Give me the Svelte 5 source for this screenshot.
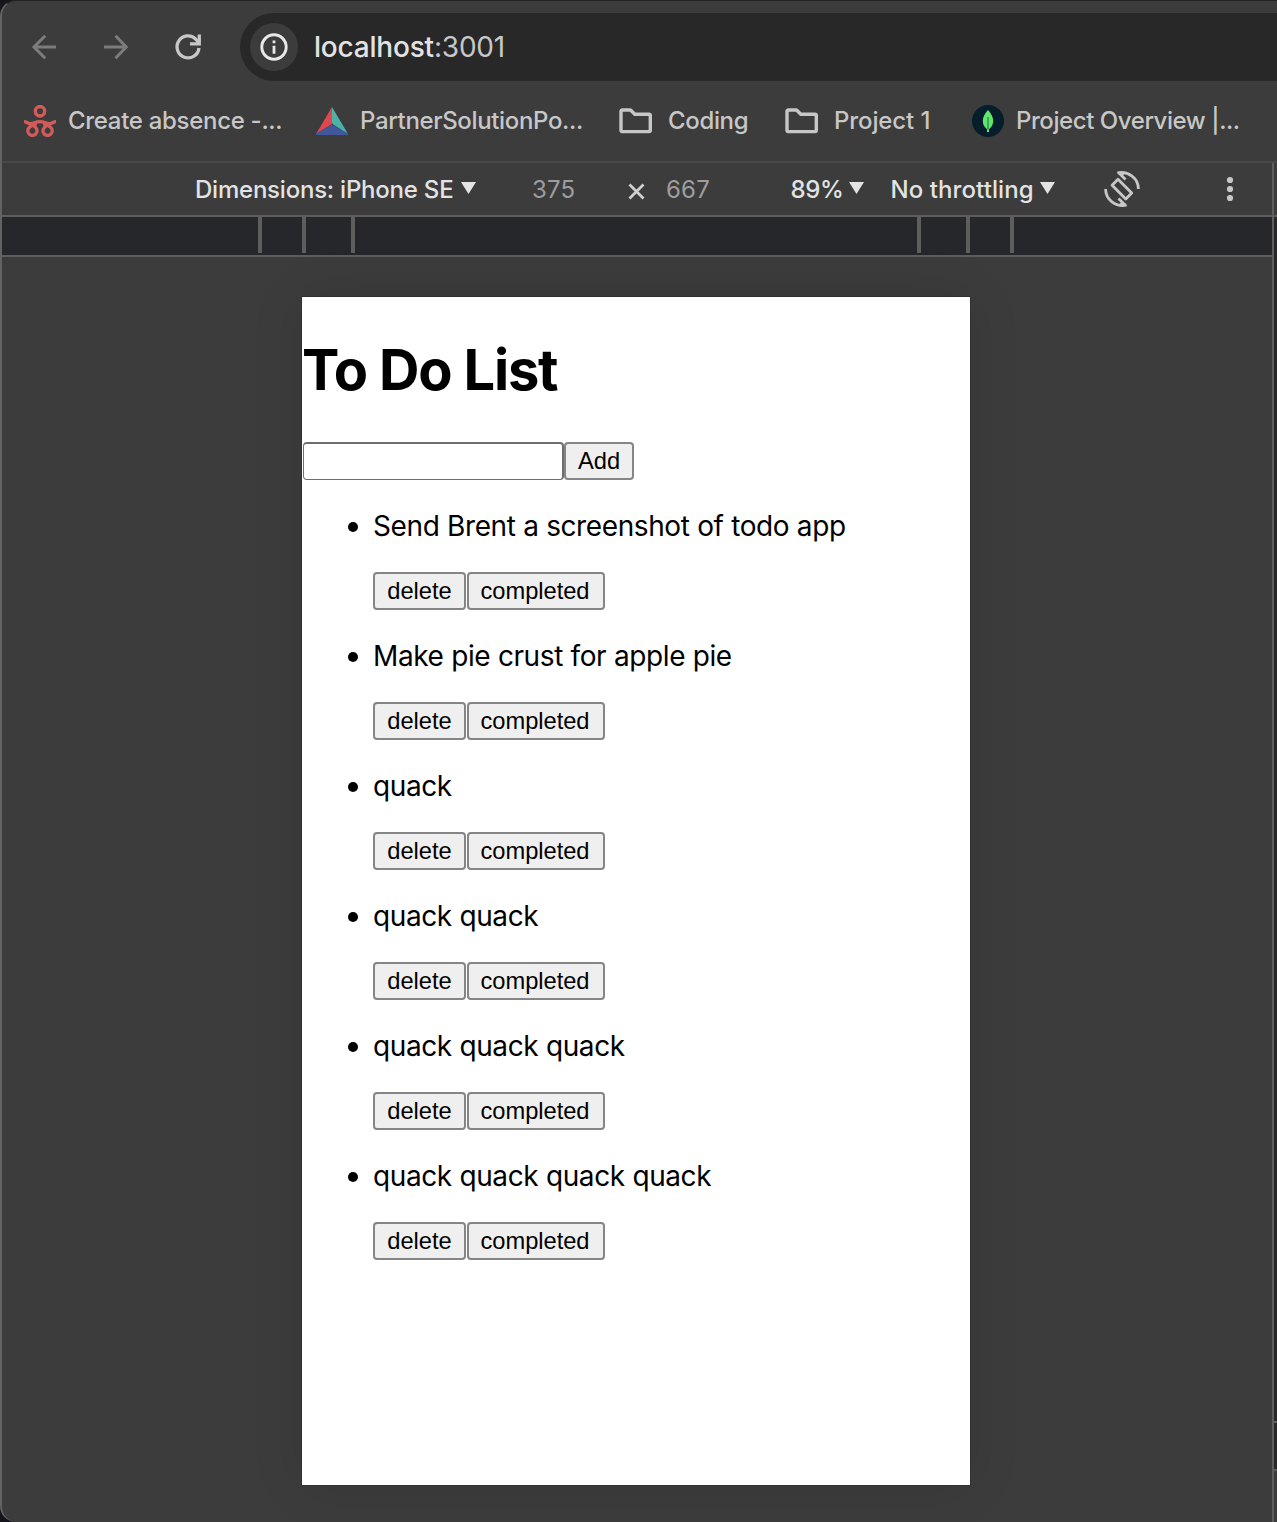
<script>
  const tasks = [
    'Send Brent a screenshot of todo app',
    'Make pie crust for apple pie',
    'quack',
    'quack quack',
    'quack quack quack',
    'quack quack quack quack'
  ];
  let draft = $state('');
</script>

{#snippet folder()}
  <svg class="folder" width="34" height="28" viewBox="0 0 34 28" fill="none" stroke="#c7c7c7" stroke-width="3.4" stroke-linejoin="round">
    <path d="M3.300 3h8.200l4.300 4.300H30a1.300 1.300 0 0 1 1.300 1.300v14.700a1.300 1.300 0 0 1-1.300 1.300H3.300a1.300 1.300 0 0 1-1.300-1.300V4.300A1.300 1.300 0 0 1 3.300 3z" />
  </svg>
{/snippet}

{#snippet caret()}
  <svg class="caret" width="15" height="12" viewBox="0 0 15 12"><path d="M0 0h15L7.5 12z" fill="#e3e3e3" /></svg>
{/snippet}

<div class="window">
  <header class="nav">
    <svg class="back" width="26" height="26" viewBox="0 0 26 26" fill="none" stroke="#7c7c7c" stroke-width="3"><path d="M25 13H3.500M14.200 1.800L3 13l11.200 11.200" /></svg>
    <svg class="forward" width="26" height="26" viewBox="0 0 26 26" fill="none" stroke="#7c7c7c" stroke-width="3"><path d="M1 13h22M12.500 1.800L23.200 13 12.500 24.200" /></svg>
    <svg class="reload" width="28" height="28" viewBox="0 0 28 28" fill="none" stroke="#c7c7c7" stroke-width="3.300"><path d="M25 15A11 11 0 1 1 22 6.300L25 9.600" /><path d="M25.300 1.400v9.400H16" /></svg>
    <div class="address">
      <span class="info">
        <svg width="28" height="28" viewBox="0 0 28 28"><circle cx="14" cy="14" r="12.200" fill="none" stroke="#e8e8e8" stroke-width="2.900" /><path d="M12.600 12.800h2.800v8h-2.800zM12.600 7.400h2.800v2.800h-2.800z" fill="#e8e8e8" /></svg>
      </span>
      <span class="url">localhost<span class="port">:3001</span></span>
    </div>
  </header>

  <nav class="bookmarks">
    <a class="bm b1" href="#absence">
      <svg width="32" height="32" viewBox="0 0 32 32" fill="none" stroke="#d25c59" stroke-width="3.300"><circle cx="16" cy="6.300" r="4.700" /><path d="M0 16.700c3 0 3.600 2 6.400 2 3.800 0 4.600-2 9.600-2s5.800 2 9.600 2c2.800 0 3.400-2 6.400-2" /><path d="M12.500 18.500C10 20 8 19.800 5.500 22.200a4.600 4.600 0 1 0 7 1.500c-.8-1.500-2-2.500-3.500-3.300M19.500 18.500c2.500 1.500 4.500 1.300 7 3.700a4.600 4.600 0 1 1-7 1.500c.8-1.500 2-2.500 3.500-3.300" /></svg>
      <span class="t1">Create absence -...</span>
    </a>
    <a class="bm b2" href="#partner">
      <svg width="32" height="32" viewBox="0 0 32 32"><path d="M16 2L0 29l16-10z" fill="#e0474c" /><path d="M16 2l16 27-14-9-2-2z" fill="#4cb1a7" /><path d="M16 19.500L0 28.500V30h32v-1.500z" fill="#41579b" /></svg>
      <span class="t2">PartnerSolutionPo...</span>
    </a>
    <a class="bm b3" href="#coding">{@render folder()}<span class="t3">Coding</span></a>
    <a class="bm b4" href="#project">{@render folder()}<span class="t4">Project 1</span></a>
    <a class="bm b5" href="#overview">
      <svg width="32" height="32" viewBox="0 0 32 32"><circle cx="16" cy="16" r="16" fill="#061e2b" /><path d="M16 5c3 3.500 5.200 6.500 5.200 11 0 3.800-1.700 6-4.200 8.200V27h-2v-2.800c-2.500-2.200-4.200-4.400-4.200-8.200C10.800 11.500 13 8.500 16 5z" fill="#62e56b" /><path d="M16 12v12.500" stroke="#168449" stroke-width="1.200" /></svg>
      <span class="t5">Project Overview |...</span>
    </a>
  </nav>

  <div class="workspace">
    <main class="emulator">
      <div class="device-bar">
        <span class="select dims"><span>Dimensions: iPhone SE</span>{@render caret()}</span>
        <span class="field w">375</span>
        <svg class="times" width="17" height="17" viewBox="0 0 17 17" stroke="#d0d0d0" stroke-width="2.800"><path d="M1.500 1.500l14 14M15.500 1.500l-14 14" /></svg>
        <span class="field h">667</span>
        <span class="select zoom"><span>89%</span>{@render caret()}</span>
        <span class="select throttle"><span>No throttling</span>{@render caret()}</span>
        <svg class="rotate" width="36" height="36" viewBox="0 0 36 36" fill="none" stroke="#c7c7c7" stroke-width="2.800">
          <path d="M14 8.300L27.700 22l-5.900 5.900L8.100 14.200z" stroke-linejoin="round" />
          <path d="M13.500 1.900C24.500-.2 34.400 7.500 34.400 18M15 2l6.500 6.500M22.500 34.100C11.500 36.200 1.600 28.500 1.600 18M21 34l-6.500-6.500" />
          <path d="M12.500 1.500l8.500 1-3 3zM23.500 34.500l-8.500-1 3-3z" fill="#c7c7c7" stroke="none" />
        </svg>
        <svg class="more" width="8" height="26" viewBox="0 0 8 26" fill="#c7c7c7"><circle cx="4" cy="4" r="3.100" /><circle cx="4" cy="13" r="3.100" /><circle cx="4" cy="22" r="3.100" /></svg>
      </div>
      <div class="ruler">
        <i></i><i></i><i></i><i></i><i></i><i></i>
      </div>
      <section class="device">
        <h1>To Do List</h1>
        <form class="entry" onsubmit={(e) => e.preventDefault()}>
          <input bind:value={draft} aria-label="New task" />
          <button class="add">Add</button>
        </form>
        <ul>
          {#each tasks as task}
            <li>
              <p>{task}</p>
              <div class="actions"><button class="delete">delete</button><button class="done">completed</button></div>
            </li>
          {/each}
        </ul>
      </section>
    </main>
    <aside class="side">
      <div class="side-head"></div>
      <div class="side-body"></div>
      <div class="side-mid"></div>
      <div class="side-foot"></div>
    </aside>
  </div>
</div>

<style>
  :global(body) { background: #15161b; overflow: hidden; }
  * { box-sizing: border-box; }
  svg { display: block; flex: none; }
  .window {
    width: 1277px; height: 1522px; overflow: hidden;
    display: flex; flex-direction: column;
    background: #3c3c3c; border-left: 2px solid #626262; border-top: 1px solid #242424;
    border-radius: 16px 0 0 16px;
    font-family: Inter, 'Liberation Sans', sans-serif;
    color: #e3e3e3; white-space: nowrap;
  }
  .nav { height: 80px; padding: 12px 0 0 29px; display: flex; align-items: center; flex: none; }
  .forward { margin-left: 46px; }
  .reload { margin-left: 45px; }
  .address {
    margin-left: 38px; flex: 1; height: 68px; border-radius: 34px 0 0 34px;
    background: #282828; display: flex; align-items: center; padding-left: 10px;
  }
  .info { width: 48px; height: 48px; border-radius: 50%; background: #3c3c3c; display: grid; place-items: center; }
  .url { margin-left: 16px; font-size: 28px; line-height: 34px; font-weight: 500; letter-spacing: -0.200px; }
  .port { color: #c7c7c7; font-weight: 400; }
  .bookmarks { height: 80px; flex: none; display: flex; align-items: center; padding-left: 22px; }
  .bm { display: flex; align-items: center; gap: 12px; color: #c7c7c7; text-decoration: none; font-size: 24px; line-height: 30px; font-weight: 500; }
  .bm span { flex: none; }
  .t1 { letter-spacing: -0.300px; }
  .t2 { letter-spacing: -0.350px; }
  .t3 { letter-spacing: -0.350px; }
  .t4 { letter-spacing: -0.100px; }
  .t5 { letter-spacing: -0.430px; }
  .b1 { width: 292px; }
  .b2 { width: 303px; }
  .b3 { width: 166px; gap: 15px; }
  .b4 { width: 187px; gap: 15px; }
  .workspace { flex: 1; display: flex; min-height: 0; border-top: 2px solid #484848; }
  .emulator { width: 1270px; flex: none; display: flex; flex-direction: column; }
  .device-bar { height: 54px; border-bottom: 2px solid #5e5e5e; display: flex; align-items: center; padding-left: 193px; font-size: 24px; flex: none; font-weight: 500; }
  .select { display: flex; align-items: center; justify-content: space-between; flex: none; }
  .caret { margin-top: -3px; }
  .dims { width: 280.500px; letter-spacing: -0.220px; }
  .field { color: #9d9d9d; flex: none; font-weight: 400; }
  .w { margin-left: 56.500px; width: 95.500px; letter-spacing: 0.200px; }
  .times { margin-top: 5px; }
  .h { margin-left: 21.500px; width: 124.500px; letter-spacing: 0.200px; }
  .zoom { width: 73.500px; letter-spacing: -0.300px; }
  .throttle { width: 164.500px; margin-left: 26.500px; letter-spacing: 0.080px; }
  .rotate { margin-left: 48.500px; }
  .more { margin-left: 86px; }
  .ruler { height: 40px; flex: none; background: #26272b; border-bottom: 2px solid #5e5e5e; display: flex; padding-left: 256px; }
  .ruler i { width: 4px; height: 36px; background: #5e5e5e; }
  .ruler i:nth-child(2) { margin-left: 40px; }
  .ruler i:nth-child(3) { margin-left: 45px; }
  .ruler i:nth-child(4) { margin-left: 562px; }
  .ruler i:nth-child(5) { margin-left: 45px; }
  .ruler i:nth-child(6) { margin-left: 40px; }
  .device {
    width: 668px; height: 1188px; margin: 40px 0 0 300px; background: #fff; color: #000;
    display: flex; flex-direction: column; box-shadow: 0 0 0 1px #303030, 0 0 50px rgba(0, 0, 0, 0.1); flex: none;
  }
  h1 { margin: 38px 0; font-size: 56px; line-height: 70px; height: 70px; font-weight: 700; letter-spacing: -1.200px; }
  .entry { display: flex; height: 38px; flex: none; margin: -1px 0 0 1px; }
  input, button {
    height: 38px; border: 2px solid #858585; border-radius: 4px; margin: 0; padding: 0;
    font: 23.700px/32px 'Liberation Sans', sans-serif; color: #000;
  }
  button { background: #efefef; }
  input { width: 260.500px; background: #fff; outline: none; border-width: 2px 2px 1px 1px; border-color: #6e6e6e; }
  .add { width: 70px; margin-left: 0.500px; }
  ul { list-style: none; margin: 0; padding: 28.300px 0 0 71px; }
  li { height: 130px; }
  p { margin: 0; height: 63.500px; font-size: 28px; line-height: 36px; display: flex; letter-spacing: -0.400px; word-spacing: 0.200px; }
  p::before { content: ''; width: 10px; height: 10px; border-radius: 50%; background: #000; margin: 14px 15px 0 -25px; }
  .actions { display: flex; gap: 0.500px; }
  .delete { width: 93px; }
  .done { width: 138px; letter-spacing: -0.050px; padding-right: 1px; }
  .side { flex: 1; border-left: 2px solid #5e5e5e; display: flex; flex-direction: column; }
  .side-head { height: 54px; border-bottom: 2px solid #5e5e5e; }
  .side-body { height: 1206px; border-bottom: 2px solid #5e5e5e; background: #282828; }
  .side-mid { height: 48px; border-bottom: 2px solid #5e5e5e; background: #282828; }
</style>
